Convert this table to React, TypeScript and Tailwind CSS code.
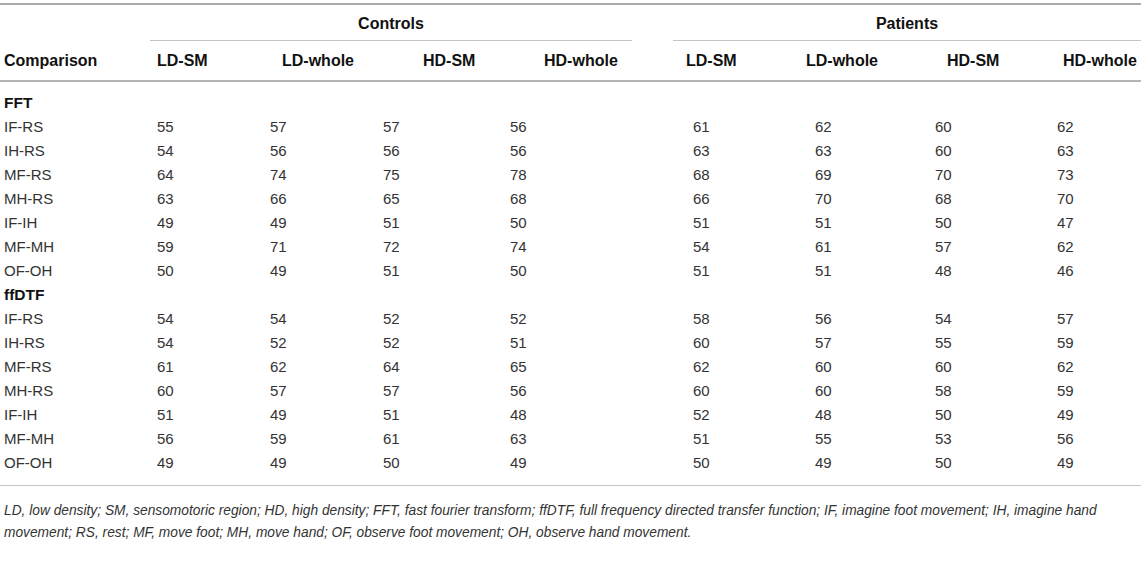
import React from 'react';

type Row = { label: string; values: number[] };

const fft: Row[] = [
  { label: 'IF-RS', values: [55, 57, 57, 56, 61, 62, 60, 62] },
  { label: 'IH-RS', values: [54, 56, 56, 56, 63, 63, 60, 63] },
  { label: 'MF-RS', values: [64, 74, 75, 78, 68, 69, 70, 73] },
  { label: 'MH-RS', values: [63, 66, 65, 68, 66, 70, 68, 70] },
  { label: 'IF-IH', values: [49, 49, 51, 50, 51, 51, 50, 47] },
  { label: 'MF-MH', values: [59, 71, 72, 74, 54, 61, 57, 62] },
  { label: 'OF-OH', values: [50, 49, 51, 50, 51, 51, 48, 46] },
];

const ffdtf: Row[] = [
  { label: 'IF-RS', values: [54, 54, 52, 52, 58, 56, 54, 57] },
  { label: 'IH-RS', values: [54, 52, 52, 51, 60, 57, 55, 59] },
  { label: 'MF-RS', values: [61, 62, 64, 65, 62, 60, 60, 62] },
  { label: 'MH-RS', values: [60, 57, 57, 56, 60, 60, 58, 59] },
  { label: 'IF-IH', values: [51, 49, 51, 48, 52, 48, 50, 49] },
  { label: 'MF-MH', values: [56, 59, 61, 63, 51, 55, 53, 56] },
  { label: 'OF-OH', values: [49, 49, 50, 49, 50, 49, 50, 49] },
];

const grid = 'grid grid-cols-[157px_113px_113px_127px_183px_122px_120px_122px_88px]';

const DataRow: React.FC<{ row: Row }> = ({ row }) => (
  <div className={`${grid} h-[24px] items-center`}>
    <div className="pl-[4px]">{row.label}</div>
    {row.values.map((v, i) => (
      <div key={i}>{v}</div>
    ))}
  </div>
);

const SectionRow: React.FC<{ title: string }> = ({ title }) => (
  <div className="h-[24px] flex items-center pl-[4px] font-bold text-[15.5px] text-[#111]">{title}</div>
);

export default function App() {
  return (
    <div
      className="w-[1145px] h-[569px] bg-white text-[15px] text-[#333] overflow-hidden"
      style={{ fontFamily: '"Liberation Sans", Arial, sans-serif' }}
    >
      <div className="pt-[3px] w-[1141px]">
        <div className="border-t-2 border-[#ababab]" />

        {/* group headers */}
        <div className="flex h-[36px] pt-[3px] font-bold text-[16px] text-[#111]">
          <div className="w-[150px]" />
          <div className="w-[482px] flex items-center justify-center border-b border-[#c4c4c4]">Controls</div>
          <div className="w-[41px]" />
          <div className="flex-1 flex items-center justify-center border-b border-[#c4c4c4]">Patients</div>
        </div>

        {/* column headers */}
        <div className={`${grid} h-[41px] items-center font-bold text-[16px] text-[#111] border-b-2 border-[#b5b5b5]`}>
          <div className="pl-[4px]">Comparison</div>
          <div>LD-SM</div>
          <div className="pl-[12px]">LD-whole</div>
          <div className="pl-[40px]">HD-SM</div>
          <div className="pl-[34px]">HD-whole</div>
          <div className="-ml-[7px]">LD-SM</div>
          <div className="-ml-[9px]">LD-whole</div>
          <div className="pl-[12px]">HD-SM</div>
          <div className="pl-[6px] whitespace-nowrap">HD-whole</div>
        </div>

        {/* body */}
        <div className="pt-[9px] pb-[10px] border-b border-[#c4c4c4]">
          <SectionRow title="FFT" />
          {fft.map((r, i) => (
            <DataRow key={`a${i}`} row={r} />
          ))}
          <SectionRow title="ffDTF" />
          {ffdtf.map((r, i) => (
            <DataRow key={`b${i}`} row={r} />
          ))}
        </div>
      </div>

      <p className="pt-[14px] pl-[4px] w-[1145px] whitespace-nowrap text-[13.75px] leading-[22px] italic text-[#333]">
        LD, low density; SM, sensomotoric region; HD, high density; FFT, fast fourier transform; ffDTF, full frequency
        directed transfer function; IF, imagine foot movement; IH, imagine hand
        <br />
        movement; RS, rest; MF, move foot; MH, move hand; OF, observe foot movement; OH, observe hand movement.
      </p>
    </div>
  );
}
